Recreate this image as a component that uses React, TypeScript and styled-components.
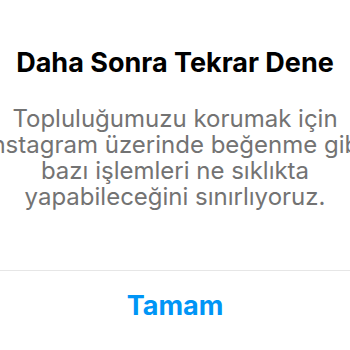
import React from "react";
import styled, { createGlobalStyle } from "styled-components";

const Global = createGlobalStyle`
  html, body { margin: 0; padding: 0; background: #ffffff; }
  body { font-family: Inter, "Noto Sans", sans-serif; -webkit-font-smoothing: antialiased; }
  #root { width: 350px; height: 350px; overflow: hidden; }
`;

const Stage = styled.div`
  width: 350px;
  height: 350px;
  display: flex;
  justify-content: center;
  overflow: hidden;
  background: #ffffff;
`;

const Dialog = styled.div`
  flex: 0 0 400px;
  width: 400px;
  display: flex;
  flex-direction: column;
  align-items: stretch;
`;

const Content = styled.div`
  display: flex;
  flex-direction: column;
  align-items: center;
  padding: 47px 0 60px;
  gap: 27px;
`;

const Title = styled.h1`
  margin: 0;
  font-size: 27px;
  line-height: 32px;
  font-weight: 700;
  color: #000000;
  text-align: center;
`;

const Message = styled.p`
  margin: 0;
  font-size: 24px;
  line-height: 26px;
  font-weight: 400;
  color: #737373;
  text-align: center;
  white-space: pre-line;
`;

const Divider = styled.div`
  height: 1px;
  background: #e6e6e6;
`;

const ActionButton = styled.button`
  border: 0;
  background: transparent;
  padding: 0;
  height: 68px;
  font-family: inherit;
  font-size: 27px;
  font-weight: 700;
  color: #0095f6;
  cursor: pointer;
`;

export default function App() {
  return (
    <>
      <Global />
      <Stage>
        <Dialog>
          <Content>
            <Title>Daha Sonra Tekrar Dene</Title>
            <Message>
              {"Topluluğumuzu korumak için\nInstagram üzerinde beğenme gibi\nbazı işlemleri ne sıklıkta\nyapabileceğini sınırlıyoruz."}
            </Message>
          </Content>
          <Divider />
          <ActionButton>Tamam</ActionButton>
        </Dialog>
      </Stage>
    </>
  );
}
